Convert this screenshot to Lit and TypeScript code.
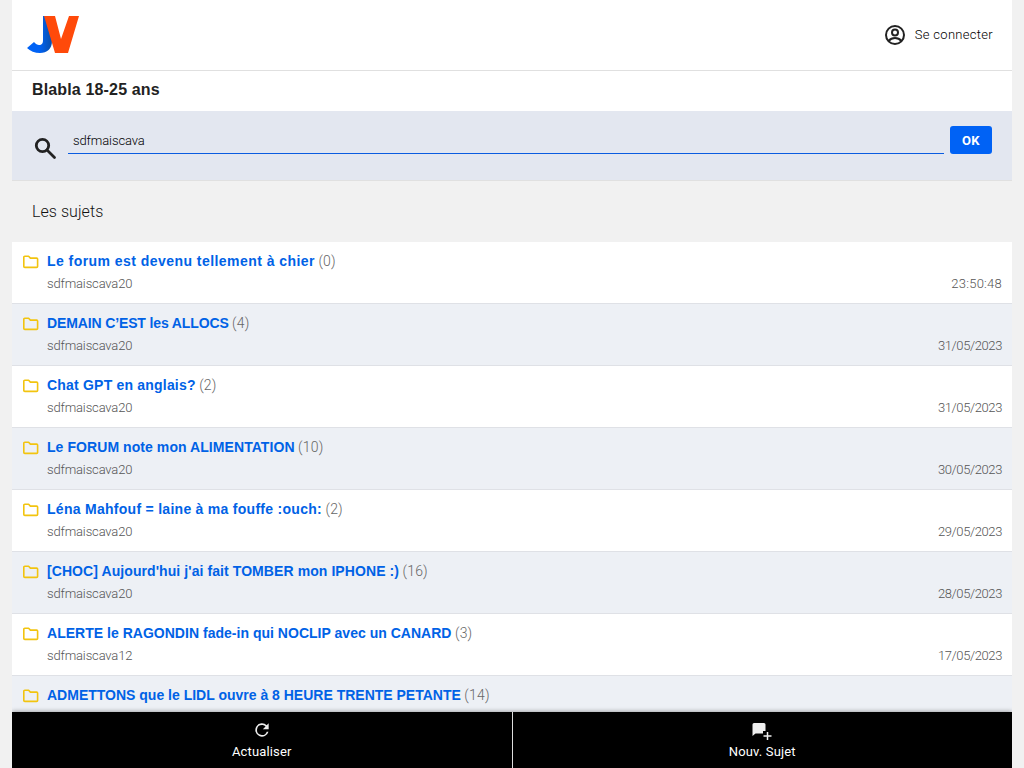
import { LitElement, html, css, svg } from "lit";
import { customElement } from "lit/decorators.js";

// title, count, author, date, title letter-spacing, date letter-spacing
const topics: [string, string, string, string, number, number][] = [
  ["Le forum est devenu tellement à chier", "(0)", "sdfmaiscava20", "23:50:48", 0.45, 0.25],
  ["DEMAIN C’EST les ALLOCS", "(4)", "sdfmaiscava20", "31/05/2023", -0.13, -0.4],
  ["Chat GPT en anglais?", "(2)", "sdfmaiscava20", "31/05/2023", 0.2, -0.4],
  ["Le FORUM note mon ALIMENTATION", "(10)", "sdfmaiscava20", "30/05/2023", 0.07, -0.4],
  ["Léna Mahfouf = laine à ma fouffe :ouch:", "(2)", "sdfmaiscava20", "29/05/2023", 0.28, -0.4],
  ["[CHOC] Aujourd'hui j'ai fait TOMBER mon IPHONE :)", "(16)", "sdfmaiscava20", "28/05/2023", 0.08, -0.4],
  ["ALERTE le RAGONDIN fade-in qui NOCLIP avec un CANARD", "(3)", "sdfmaiscava12", "17/05/2023", 0.02, -0.4],
  ["ADMETTONS que le LIDL ouvre à 8 HEURE TRENTE PETANTE", "(14)", "sdfmaiscava20", "16/05/2023", 0, -0.4],
];

const folder = svg`<path d="M1.800 3.200a1 1 0 0 1 1-1h3.800l1.800 1.900h6.200a1 1 0 0 1 1 1v7.300a1 1 0 0 1-1 1H2.800a1 1 0 0 1-1-1z" fill="none" stroke="#f2c40f" stroke-width="1.600" stroke-linejoin="round"/>`;

@customElement("app-root")
export class AppRoot extends LitElement {
  static styles = css`
    :host { display: block; height: 768px; overflow: hidden; background: #f1f1f1; font-family: Roboto, "Liberation Sans", sans-serif; color: #222; }
    .page { width: 1000px; margin: 0 auto; height: 768px; overflow: hidden; position: relative; }
    header { height: 71px; box-sizing: border-box; background: #fff; border-bottom: 1px solid #e0e0e0; display: flex; align-items: center; justify-content: space-between; padding: 0 19px 0 15px; }
    .logo { display: block; margin-top: -1px; }
    .login { display: flex; align-items: center; gap: 8px; font-size: 13px; letter-spacing: 0.3px; color: #000; font-weight: 300; margin-top: -1px; }
    .title { height: 40px; background: #fff; display: flex; align-items: center; padding: 0 0 2px 20px; box-sizing: border-box; font-family: "Liberation Sans", Arial, sans-serif; font-size: 16px; font-weight: 700; letter-spacing: 0.15px; color: #222; }
    .search { height: 70px; box-sizing: border-box; background: #e3e7f0; border-bottom: 1px solid #e0e0e0; display: flex; padding: 15px 20px 0 20px; gap: 6px; align-items: flex-start; }
    .search .mag { margin-top: 10px; width: 30px; flex: none; }
    .field { flex: 1; height: 28px; border-bottom: 1px solid #0a5ce0; font-size: 13px; font-weight: 300; padding: 7px 0 0 5px; box-sizing: border-box; letter-spacing: -0.1px; line-height: 16px; color: #000; }
    .ok { width: 42px; height: 28px; background: #0062f5; color: #fff; border-radius: 3px; font-size: 13px; font-weight: 700; display: flex; align-items: center; justify-content: center; letter-spacing: 0.5px; }
    h2 { margin: 0; height: 61px; display: flex; align-items: center; padding: 0 0 1px 20px; box-sizing: border-box; font-size: 16px; font-weight: 300; letter-spacing: 0.05px; color: #111; }
    .row { height: 62px; box-sizing: border-box; border-bottom: 1px solid #dfe1e6; background: #fff; display: flex; align-items: flex-start; }
    .row.alt { background: #edf0f5; }
    .ico { margin: 12px 0 0 10px; width: 25px; flex: none; }
    .body { flex: 1; padding: 10px 10px 0 0; min-width: 0; }
    .line1 { font-size: 14px; line-height: 18px; }
    .line1 b { color: #0062e6; font-family: "Liberation Sans", Arial, sans-serif; font-weight: 700; }
    .line1 span { color: #666; font-weight: 300; letter-spacing: 0.2px; }
    .line2 { display: flex; justify-content: space-between; margin-top: 6px; line-height: 16px; font-size: 13px; font-weight: 300; color: #555; }
    .author { letter-spacing: -0.15px; }
    footer { position: absolute; left: 0; right: 0; bottom: 0; height: 56px; background: #000; color: #fff; display: flex; box-shadow: 0 -1px 4px rgba(0,0,0,.3); }
    .btn { flex: 1; display: flex; flex-direction: column; align-items: center; font-size: 13px; letter-spacing: 0.15px; font-weight: 400; padding-top: 8px; box-sizing: border-box; }
    .btn + .btn { border-left: 1px solid #ddd; }
    .btn svg { height: 20px; display: block; margin-bottom: 4px; }
  `;

  render() {
    return html`<div class="page">
      <header>
        <svg class="logo" width="54" height="40" viewBox="0 0 54 40">
          <defs><linearGradient id="g" x1="0" x2="1" y1="0" y2="0"><stop offset="0.5" stop-color="#0062f5"/><stop offset="1" stop-color="#0a4ea8"/></linearGradient></defs>
          <path d="M16 1h9v25c0 8-5 12-12 12-5 0-10-2-13-5l7-6c1.500 2 3.500 3 5 3 3 0 4-1.500 4-5z" fill="url(#g)"/>
          <path d="M17 1h11l6 23 8-23h10L41 38H28z" fill="#ff4a0a"/>
        </svg>
        <div class="login">
          <svg width="24" height="24" viewBox="0 0 24 24" fill="none" stroke="#222" stroke-width="2"><circle cx="12" cy="12" r="9"/><circle cx="12" cy="9.500" r="3"/><path d="M5.500 18c2-2.200 4-2.900 6.500-2.900s4.500.7 6.500 2.900"/></svg>
          <span>Se connecter</span>
        </div>
      </header>
      <div class="title">Blabla 18-25 ans</div>
      <div class="search">
        <svg class="mag" width="24" height="24" viewBox="0 0 30 24" preserveAspectRatio="xMinYMin" fill="none" stroke="#222" stroke-width="2.800"><circle cx="10.500" cy="9.500" r="6.200"/><path d="M15 14l7.500 7.500" stroke-linecap="round"/></svg>
        <div class="field">sdfmaiscava</div>
        <div class="ok">OK</div>
      </div>
      <h2>Les sujets</h2>
      ${topics.map((t, i) => html`<div class="row ${i % 2 ? "alt" : ""}">
        <svg class="ico" width="20" height="20" viewBox="0 0 25 20" preserveAspectRatio="xMinYMin">${folder}</svg>
        <div class="body">
          <div class="line1"><b style="letter-spacing:${t[4]}px">${t[0]}</b> <span>${t[1]}</span></div>
          <div class="line2"><span class="author">${t[2]}</span><span style="letter-spacing:${t[5]}px">${t[3]}</span></div>
        </div>
      </div>`)}
      <footer>
        <div class="btn">
          <svg width="20" height="20" viewBox="0 0 24 24" fill="#eee"><path d="M17.650 6.350A8 8 0 1 0 19.740 14h-2.080A6 6 0 1 1 12 6c1.660 0 3.140.69 4.220 1.780L13 11h7V4z"/></svg>
          <span>Actualiser</span>
        </div>
        <div class="btn">
          <svg width="24" height="20" viewBox="0 0 24 20" fill="#eee"><path d="M4 3h10a1.500 1.500 0 0 1 1.500 1.500V11H13v2.500H5.500L2.500 16V4.500A1.500 1.500 0 0 1 4 3z"/><path d="M17.500 12v8M13.500 16h8" fill="none" stroke="#eee" stroke-width="1.500"/></svg>
          <span>Nouv. Sujet</span>
        </div>
      </footer>
    </div>`;
  }
}
